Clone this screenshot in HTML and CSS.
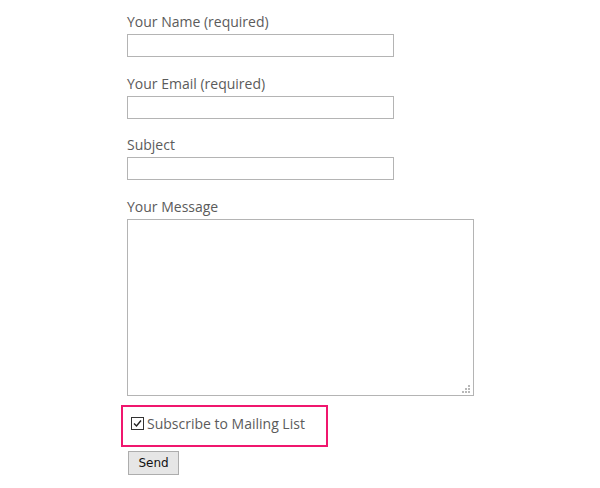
FILE: index.html
```html
<!DOCTYPE html>
<html>
<head>
    <meta charset="utf-8">
    <title>Contact</title>
    <link rel="stylesheet" href="styles.css">
</head>
<body>
    <main class="main">
        <form class="contact-form">
            <div class="field">
                <label for="name">Your Name (required)</label>
                <input type="text" id="name">
            </div>
            <div class="field">
                <label for="email">Your Email (required)</label>
                <input type="text" id="email">
            </div>
            <div class="field">
                <label for="subject">Subject</label>
                <input type="text" id="subject">
            </div>
            <div class="field">
                <label for="message">Your Message</label>
                <div class="textarea-wrap">
                    <textarea id="message"></textarea>
                    <!-- old style resize grip -->
                    <svg class="grip" width="9" height="9" viewBox="0 0 9 9">
                        <g fill="#b8b8b8">
                            <rect x="6" y="0" width="2" height="2"/>
                            <rect x="3" y="3" width="2" height="2"/>
                            <rect x="6" y="3" width="2" height="2"/>
                            <rect x="0" y="6" width="2" height="2"/>
                            <rect x="3" y="6" width="2" height="2"/>
                            <rect x="6" y="6" width="2" height="2"/>
                        </g>
                    </svg>
                </div>
            </div>
            <!-- highlighted subscribe option -->
            <div class="subscribe">
                <label class="subscribe-label">
                    <svg class="check" width="13" height="13" viewBox="0 0 13 13">
                        <rect x="0.5" y="0.5" width="12" height="12" fill="#fff" stroke="#333"/>
                        <path d="M3 6.5 L5.5 9 L10 3.5" fill="none" stroke="#222" stroke-width="1.4"/>
                    </svg>Subscribe to Mailing List
                </label>
            </div>
            <button type="button" class="btn-send">Send</button>
        </form>
    </main>
</body>
</html>
```

FILE: styles.css
```css
body {
    margin: 0;
    background: #fff;
    font-family: "Open Sans", "Liberation Sans", sans-serif;
    font-size: 14px;
    color: #5b5b5b;
}

.contact-form {
    display: flex;
    flex-direction: column;
    align-items: flex-start;
    padding: 12px 0 0 127px;
}

.field {
    margin-bottom: 16.67px;
}

.field > label {
    display: block;
    line-height: 19px;
}

.field > input {
    display: block;
    box-sizing: border-box;
    width: 267px;
    height: 23px;
    margin: 3px 0 0;
    border: 1px solid #b4b4b4;
    padding: 2px 4px;
}

.textarea-wrap {
    position: relative;
    margin-top: 3px;
}

.textarea-wrap > textarea {
    display: block;
    box-sizing: border-box;
    width: 347px;
    height: 177px;
    margin: 0;
    border: 1px solid #b4b4b4;
    resize: none;
}

.grip {
    position: absolute;
    right: 3px;
    bottom: 2px;
}

.subscribe {
    box-sizing: border-box;
    width: 207px;
    height: 42px;
    margin: -8px 0 0 -6px;
    border: 2px solid #f0166e;
    padding: 6px 0 0 8px;
}

.subscribe-label {
    display: flex;
    align-items: center;
    line-height: 21px;
}

.check {
    margin: 1px 3px 0 0;
}

.btn-send {
    margin: 4px 0 0 1px;
    width: 51px;
    height: 24px;
    padding: 0;
    background: #e6e6e6;
    border: 1px solid #adadad;
    border-radius: 0;
    font-family: "DejaVu Sans", sans-serif;
    font-size: 12px;
    color: #111;
}
```
